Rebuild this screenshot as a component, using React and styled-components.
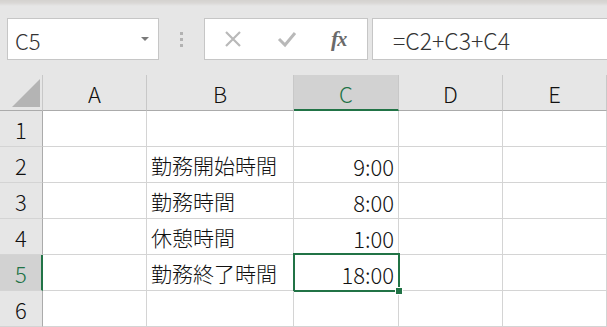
import React from "react";
import styled, { createGlobalStyle, css } from "styled-components";

const GREEN = "#217346";
const GRID = "#d4d4d4";
const HEAD_LINE = "#ababab";

const COLS = [
  { key: "A", width: 104 },
  { key: "B", width: 147 },
  { key: "C", width: 105 },
  { key: "D", width: 104 },
  { key: "E", width: 104 },
];

const ROWS = [
  { n: 1, b: "", c: "" },
  { n: 2, b: "勤務開始時間", c: "9:00" },
  { n: 3, b: "勤務時間", c: "8:00" },
  { n: 4, b: "休憩時間", c: "1:00" },
  { n: 5, b: "勤務終了時間", c: "18:00" },
  { n: 6, b: "", c: "" },
];

const template = `43px ${COLS.map((c) => c.width + "px").join(" ")}`;

const App = () => {
  return (
    <>
      <GlobalStyle />
      <Page>
        <Toolbar>
          <NameBox>
            <NameText>C5</NameText>
            <DropArrow />
          </NameBox>
          <Grip>
            <Dot />
            <Dot />
            <Dot />
          </Grip>
          <ButtonBox>
            <Glyph viewBox="0 0 20 20">
              <path d="M3 3 L17 17 M17 3 L3 17" stroke="#b9b9b9" strokeWidth="2.2" fill="none" />
            </Glyph>
            <Glyph viewBox="0 0 20 20">
              <path d="M2 10 L8 16 L18 4" stroke="#b9b9b9" strokeWidth="3" fill="none" />
            </Glyph>
            <Fx>
              f<small>x</small>
            </Fx>
          </ButtonBox>
          <FormulaBox>=C2+C3+C4</FormulaBox>
        </Toolbar>

        <Sheet>
          <Corner>
            <CornerMark />
          </Corner>
          {COLS.map((c) => (
            <ColHead key={c.key} $active={c.key === "C"}>
              {c.key}
            </ColHead>
          ))}

          {ROWS.map((r) => (
            <React.Fragment key={r.n}>
              <RowHead $active={r.n === 5}>{r.n}</RowHead>
              <Cell />
              <Cell>{r.b}</Cell>
              <Cell $right $selected={r.n === 5}>
                {r.c}
              </Cell>
              <Cell />
              <Cell />
            </React.Fragment>
          ))}
        </Sheet>
      </Page>
    </>
  );
};

const GlobalStyle = createGlobalStyle`
  html, body {
    margin: 0;
    padding: 0;
    background: #ffffff;
    overflow: hidden;
  }
  body {
    font-family: "Noto Sans CJK JP", "Noto Sans", sans-serif;
    font-weight: 300;
    color: #1a1a1a;
  }
`;

const Page = styled.div`
  width: 607px;
  height: 327px;
  overflow: hidden;
`;

const Toolbar = styled.div`
  height: 75px;
  box-sizing: border-box;
  padding: 18px 0 0 7px;
  display: flex;
  align-items: flex-start;
  background: linear-gradient(#d4d2cf 0px, #dad8d6 3px, #e6e6e6 6px);
`;

const boxStyle = css`
  height: 42px;
  box-sizing: border-box;
  background: #ffffff;
  border: 1px solid #c6c6c6;
  display: flex;
  align-items: center;
`;

const NameBox = styled.div`
  ${boxStyle};
  width: 152px;
  padding: 0 9px 0 7px;
  justify-content: space-between;
`;

const NameText = styled.span`
  font-size: 22px;
  color: #333333;
  line-height: 1;
  padding-top: 2px;
`;

const DropArrow = styled.span`
  width: 0;
  height: 0;
  border-left: 4px solid transparent;
  border-right: 4px solid transparent;
  border-top: 4px solid #7a7a7a;
`;

const Grip = styled.div`
  width: 45px;
  height: 42px;
  display: flex;
  flex-direction: column;
  align-items: center;
  justify-content: center;
  gap: 3px;
`;

const Dot = styled.span`
  width: 3px;
  height: 3px;
  background: #b2b2b2;
`;

const ButtonBox = styled.div`
  ${boxStyle};
  width: 164px;
  padding-left: 18px;
  gap: 34px;
`;

const Glyph = styled.svg`
  width: 20px;
  height: 20px;
  display: block;
`;

const Fx = styled.span`
  font-family: "Liberation Serif", "DejaVu Serif", serif;
  font-style: italic;
  font-weight: bold;
  font-size: 22px;
  color: #6a6a6a;
  line-height: 1;
  letter-spacing: -1px;

  small {
    font-size: 20px;
  }
`;

const FormulaBox = styled.div`
  ${boxStyle};
  flex: 1;
  margin-left: 4px;
  margin-right: -2px;
  padding: 2px 0 0 20px;
  font-size: 23px;
  color: #333333;
`;

const Sheet = styled.div`
  display: grid;
  grid-template-columns: ${template};
  grid-auto-rows: 36px;
`;

const HeadBase = css`
  box-sizing: border-box;
  background: #e6e6e6;
  display: flex;
  align-items: center;
  justify-content: center;
  font-size: 22px;
  line-height: 1;
  color: #111111;
`;

const Corner = styled.div`
  ${HeadBase};
  border-right: 1px solid #c8c8c8;
  border-bottom: 1px solid ${HEAD_LINE};
  align-items: flex-end;
  justify-content: flex-end;
  padding: 0 2px 3px 0;
`;

const CornerMark = styled.div`
  width: 28px;
  height: 28px;
  background: #b4b4b4;
  clip-path: polygon(100% 0, 100% 100%, 0 100%);
`;

const ColHead = styled.div`
  ${HeadBase};
  border-right: 1px solid #c8c8c8;
  border-bottom: 1px solid ${HEAD_LINE};
  padding-top: 1px;

  ${(p) =>
    p.$active &&
    css`
      background: #d2d2d2;
      color: ${GREEN};
      border-bottom: 2px solid ${GREEN};
    `}
`;

const RowHead = styled.div`
  ${HeadBase};
  border-right: 1px solid ${HEAD_LINE};
  border-bottom: 1px solid ${GRID};
  padding-top: 1px;

  ${(p) =>
    p.$active &&
    css`
      background: #d2d2d2;
      color: ${GREEN};
      border-right: 2px solid ${GREEN};
      padding-left: 1px;
    `}
`;

const Cell = styled.div`
  position: relative;
  box-sizing: border-box;
  border-right: 1px solid ${GRID};
  border-bottom: 1px solid ${GRID};
  display: flex;
  align-items: center;
  justify-content: ${(p) => (p.$right ? "flex-end" : "flex-start")};
  padding: 2px 4px 0 4px;
  font-size: 21px;
  line-height: 1;
  white-space: nowrap;
  color: #111111;

  ${(p) =>
    p.$right &&
    css`
      font-size: 22px;
    `}

  ${(p) =>
    p.$selected &&
    css`
      &::before {
        content: "";
        position: absolute;
        top: -2px;
        left: -1px;
        right: -2px;
        bottom: -2px;
        border: 2px solid ${GREEN};
      }
      &::after {
        content: "";
        position: absolute;
        z-index: 2;
        right: -5px;
        bottom: -5px;
        width: 6px;
        height: 6px;
        background: ${GREEN};
        border: 1px solid #ffffff;
      }
    `}
`;

export default App;
